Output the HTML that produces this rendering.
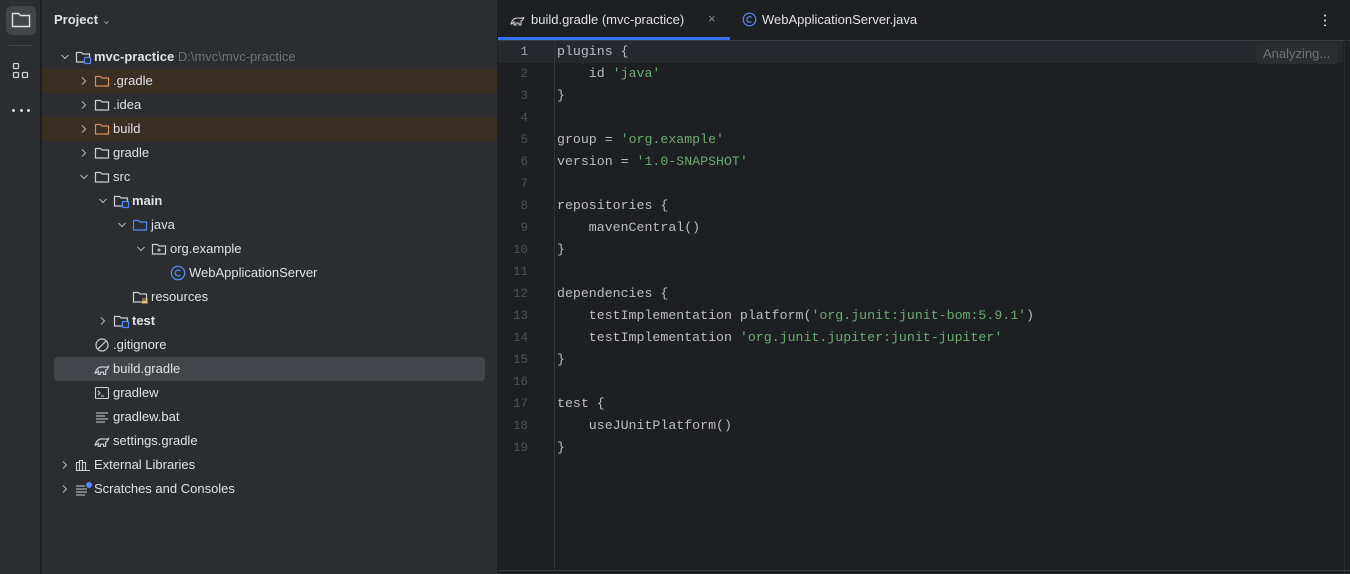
<!DOCTYPE html>
<html><head><meta charset="utf-8"><style>
*{margin:0;padding:0;box-sizing:border-box}
body{width:1350px;height:574px;overflow:hidden;background:#1e1f22;font-family:"Liberation Sans",sans-serif;color:#dfe1e5;position:relative}
.strip{position:absolute;left:0;top:0;width:41px;height:574px;background:#2b2d30;border-right:1px solid #1e1f22}
.panel{position:absolute;left:42px;top:0;width:455px;height:574px;background:#2b2d30}
.editor{position:absolute;left:498px;top:0;width:852px;height:574px;background:#1e1f22}
.row{position:absolute;left:0;width:455px;height:24px;font-size:13px;line-height:24px;white-space:nowrap}
.row .t{position:absolute;top:0}
svg.chev{position:absolute;top:0 !important;width:10px;height:24px}
.code{position:absolute;font-family:"Liberation Mono",monospace;font-size:13.25px;white-space:pre;color:#bcbec4}
.ln{position:absolute;width:30px;text-align:right;font-family:"Liberation Mono",monospace;font-size:12.5px;color:#4b5059}
.s{color:#6aab73}
</style></head><body>
<div class="strip">
 <div style="position:absolute;left:6px;top:6px;width:30px;height:29px;border-radius:6px;background:#43454a"></div>
 <svg style="position:absolute;left:11px;top:11px" width="20" height="18" viewBox="0 0 20 18"><path d="M1.5 2.5h6l2 2h9v11h-17z" fill="none" stroke="#dfe1e5" stroke-width="1.4"/></svg>
 <div style="position:absolute;left:9px;top:45px;width:24px;height:1px;background:#43454a"></div>
 <svg style="position:absolute;left:12px;top:62px" width="18" height="18" viewBox="0 0 18 18" fill="none" stroke="#ced0d6" stroke-width="1.3"><rect x="1.5" y="1.5" width="5" height="5" rx="1"/><rect x="1.5" y="10.5" width="5" height="5" rx="1"/><rect x="10.5" y="10.5" width="5" height="5" rx="1"/></svg>
 <div style="position:absolute;left:12px;top:109px;width:18px;height:4px;display:flex;justify-content:space-between"><i style="width:3px;height:3px;background:#ced0d6;border-radius:50%"></i><i style="width:3px;height:3px;background:#ced0d6;border-radius:50%"></i><i style="width:3px;height:3px;background:#ced0d6;border-radius:50%"></i></div>
</div>
<div class="panel">
 <div style="position:absolute;left:12px;top:12px;font-size:13px;font-weight:bold;color:#dfe1e5">Project <span style="font-weight:normal;color:#9da0a8;font-size:11px">&#8964;</span></div>
 <div style="position:absolute;left:0;top:69px;width:455px;height:24px;background:#3a2f25"></div>
 <div style="position:absolute;left:0;top:117px;width:455px;height:24px;background:#3a2f25"></div>
 <div style="position:absolute;left:12px;top:357px;width:431px;height:24px;background:#43454a;border-radius:4px"></div>
 <div id="tree"></div>
</div>
<div class="editor">
 <div style="position:absolute;left:0;top:40px;width:852px;height:1px;background:#393b40"></div>
 <div style="position:absolute;left:0;top:37px;width:232px;height:3px;background:#3574f0"></div>
 <svg style="position:absolute;left:12px;top:13px" width="16" height="14" viewBox="0 0 16 14" fill="none" stroke="#ced0d6" stroke-width="1.1"><path d="M1 11c1-4 3-6 7-6 3 0 5 1 6-1-1 3-2 4-3 4l0 4h-2v-2H6v2H4v-3c-1 1-2 2-3 2z"/></svg>
 <div style="position:absolute;left:33px;top:12px;font-size:13px;color:#dfe1e5">build.gradle (mvc-practice)</div>
 <div style="position:absolute;left:210px;top:11px;font-size:13px;color:#8c8f96">×</div>
 <svg style="position:absolute;left:244px;top:12px" width="15" height="15" viewBox="0 0 15 15"><circle cx="7.5" cy="7.5" r="6.3" fill="none" stroke="#548af7" stroke-width="1.2"/><path d="M9.6 5.5a2.8 2.8 0 1 0 0 4" fill="none" stroke="#548af7" stroke-width="1.2"/></svg>
 <div style="position:absolute;left:264px;top:12px;font-size:13px;color:#dfe1e5">WebApplicationServer.java</div>
 <div style="position:absolute;left:826px;top:13px;width:2px;height:13px;background:radial-gradient(circle,#ced0d6 1px,transparent 1.2px) 0 0/2px 5px"></div>
 <div style="position:absolute;left:0;top:41px;width:845px;height:22px;background:#26282e"></div>
 <div style="position:absolute;left:56px;top:41px;width:1px;height:529px;background:#313438"></div>
 <div style="position:absolute;left:758px;top:43px;width:82px;height:21px;background:#2b2d30;border-radius:4px;color:#6f737a;font-size:13px;line-height:21px;padding-left:7px">Analyzing...</div>
 <div style="position:absolute;left:846px;top:40px;width:1px;height:534px;background:#2b2d30"></div>
 <div style="position:absolute;left:0;top:570px;width:852px;height:1px;background:#393b40"></div>
 <div id="code"></div>
</div>
<script>
var code=[["plugins {"],["    id <span class=s>'java'</span>"],["}"],[""],["group = <span class=s>'org.example'</span>"],["version = <span class=s>'1.0-SNAPSHOT'</span>"],[""],["repositories {"],["    mavenCentral()"],["}"],[""],["dependencies {"],["    testImplementation platform(<span class=s>'org.junit:junit-bom:5.9.1'</span>)"],["    testImplementation <span class=s>'org.junit.jupiter:junit-jupiter'</span>"],["}"],[""],["test {"],["    useJUnitPlatform()"],["}"]];
var h="";code.forEach(function(c,i){var y=42+i*22;h+='<div class=ln style="left:0;top:'+(y+1)+'px;line-height:18px'+(i==0?';color:#a1a3ab':'')+'">'+(i+1)+'</div><div class=code style="left:59px;top:'+y+'px;line-height:20px">'+c[0]+'</div>';});
document.getElementById('code').innerHTML=h;
var F='<path d="M1.5 3.5h5l1.5 1.5h6.5v8h-13z" fill="none" stroke="COL" stroke-width="1.2"/>';
function folder(col){return '<svg width="16" height="16" viewBox="0 0 16 16">'+F.replace('COL',col)+'</svg>';}
var mod='<svg width="18" height="16" viewBox="0 0 18 16">'+F.replace('COL','#ced0d6')+'<rect x="9.5" y="8.5" width="6" height="6" rx="1" fill="#2b2d30" stroke="#548af7" stroke-width="1.2"/></svg>';
var pkg='<svg width="16" height="16" viewBox="0 0 16 16">'+F.replace('COL','#ced0d6')+'<circle cx="8" cy="9" r="1" fill="none" stroke="#ced0d6"/></svg>';
var res='<svg width="18" height="16" viewBox="0 0 18 16">'+F.replace('COL','#ced0d6')+'<path d="M10 10h6M10 12h6M10 14h6" stroke="#e0b34f" stroke-width="1"/></svg>';
var cls='<svg width="16" height="16" viewBox="0 0 15 15"><circle cx="7.5" cy="7.5" r="6.3" fill="none" stroke="#548af7" stroke-width="1.2"/><path d="M9.6 5.5a2.8 2.8 0 1 0 0 4" fill="none" stroke="#548af7" stroke-width="1.2"/></svg>';
var gr='<svg width="17" height="16" viewBox="0 0 16 14" fill="none" stroke="#ced0d6" stroke-width="1.1"><path d="M1 11c1-4 3-6 7-6 3 0 5 1 6-1-1 3-2 4-3 4l0 4h-2v-2H6v2H4v-3c-1 1-2 2-3 2z"/></svg>';
var git='<svg width="16" height="16" viewBox="0 0 16 16" fill="none" stroke="#ced0d6" stroke-width="1.2"><circle cx="8" cy="8" r="6"/><path d="M4 12L12 4"/></svg>';
var term='<svg width="16" height="16" viewBox="0 0 16 16" fill="none" stroke="#ced0d6" stroke-width="1.1"><rect x="1.5" y="2.5" width="13" height="11" rx="1"/><path d="M4 6l2 2-2 2M7 11h3"/></svg>';
var txt='<svg width="16" height="16" viewBox="0 0 16 16" stroke="#ced0d6" stroke-width="1.1"><path d="M2 4h12M2 7h9M2 10h12M2 13h9"/></svg>';
var lib='<svg width="16" height="16" viewBox="0 0 16 16" fill="none" stroke="#ced0d6" stroke-width="1.1"><path d="M1.5 5.5h3v8h-3zM4.5 3.5h3v10h-3zM7.5 5.5h3v8h-3zM1 13.5h14"/></svg>';
var scr='<svg width="18" height="16" viewBox="0 0 18 16" stroke="#ced0d6" stroke-width="1.1"><path d="M1 5h9M1 8h11M1 11h11M1 14h9"/><circle cx="14" cy="4" r="3" fill="#548af7" stroke="none"/></svg>';
var rows=[[0,2,mod,'mvc-practice',1,' <span style="color:#6f737a;font-weight:normal">D:\\mvc\\mvc-practice</span>'],
[1,1,folder('#d48f5e'),'.gradle'],[1,1,folder('#ced0d6'),'.idea'],[1,1,folder('#d48f5e'),'build'],[1,1,folder('#ced0d6'),'gradle'],[1,2,folder('#ced0d6'),'src'],
[2,2,mod,'main',1],[3,2,folder('#548af7'),'java'],[4,2,pkg,'org.example'],[5,0,cls,'WebApplicationServer'],[3,0,res,'resources'],[2,1,mod,'test',1],
[1,0,git,'.gitignore'],[1,0,gr,'build.gradle'],[1,0,term,'gradlew'],[1,0,txt,'gradlew.bat'],[1,0,gr,'settings.gradle'],[0,1,lib,'External Libraries'],[0,1,scr,'Scratches and Consoles']];
var t="";rows.forEach(function(r,i){var y=45+i*24,x=18+r[0]*19;
var ch=r[1]==1?'<svg class=chev style="left:'+x+'px;top:0" viewBox="0 0 10 24" width="10" height="24"><path d="M3 8.5l3.5 3.5L3 15.5" fill="none" stroke="#a8abb0" stroke-width="1.2"/></svg>':r[1]==2?'<svg class=chev style="left:'+x+'px;top:0" viewBox="0 0 10 24" width="10" height="24"><path d="M1.5 10l3.5 3.5L8.5 10" fill="none" stroke="#a8abb0" stroke-width="1.2"/></svg>':'';
t+='<div class=row style="top:'+y+'px">'+ch+'<span style="position:absolute;left:'+(x+15)+'px;top:0">'+r[2].replace('<svg','<svg style="position:absolute;top:4px;left:0"')+'</span><span class=t style="left:'+(x+34)+'px;'+(r[4]?'font-weight:bold':'')+'">'+r[3]+(r[5]||'')+'</span></div>';});
document.getElementById('tree').innerHTML=t;
</script>
</body></html>
